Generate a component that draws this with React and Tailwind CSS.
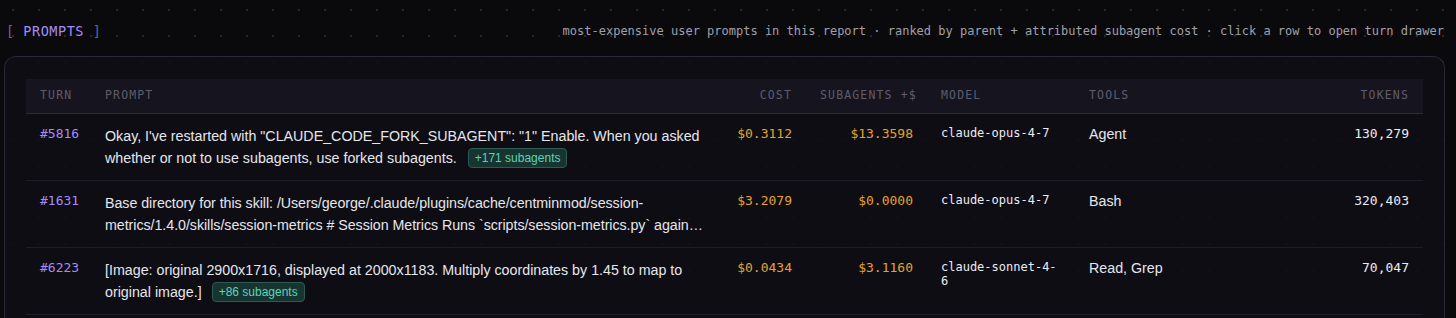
const rows = [
  {
    turn: '#5816',
    prompt: 'Okay, I\'ve restarted with "CLAUDE_CODE_FORK_SUBAGENT": "1" Enable. When you asked whether or not to use subagents, use forked subagents.',
    badge: '+171 subagents',
    badgeGap: 'ml-[11px]',
    cost: '$0.3112',
    sub: '$13.3598',
    model: 'claude-opus-4-7',
    tools: 'Agent',
    tokens: '130,279',
  },
  {
    turn: '#1631',
    prompt: 'Base directory for this skill: /Users/george/.claude/plugins/cache/centminmod/session-metrics/1.4.0/skills/session-metrics # Session Metrics Runs `scripts/session-metrics.py` against the current session and reports cost',
    cost: '$3.2079',
    sub: '$0.0000',
    model: 'claude-opus-4-7',
    tools: 'Bash',
    tokens: '320,403',
  },
  {
    turn: '#6223',
    prompt: '[Image: original 2900x1716, displayed at 2000x1183. Multiply coordinates by 1.45 to map to original image.]',
    badge: '+86 subagents',
    badgeGap: 'ml-[10px]',
    cost: '$0.0434',
    sub: '$3.1160',
    model: 'claude-sonnet-4-6',
    tools: 'Read, Grep',
    tokens: '70,047',
  },
];

const mono = "font-['DejaVu_Sans_Mono',monospace]";
const sans = "font-['Liberation_Sans',Arial,sans-serif]";

function HeaderCell({children, align = 'left'}) {
  return (
    <th
      className={`whitespace-nowrap px-[14px] py-0 text-[11.5px] font-normal uppercase tracking-[0.1em] text-[#5f5c6e] ${mono} ${
        align === 'right' ? 'text-right' : 'text-left'
      }`}
    >
      {children}
    </th>
  );
}

function PromptRow({row}) {
  return (
    <tr className="border-b border-[#1f1d2a] align-top">
      <td className={`px-[14px] pt-[11px] text-[13px] leading-[18px] text-[#a48cf7] ${mono}`}>
        {row.turn}
      </td>
      <td className={`px-[14px] py-[11px] text-[14.25px] leading-[22px] text-[#e6e6ec] ${sans}`}>
        {row.badge ? (
          <div>
            {row.prompt}
            <span
              className={`${row.badgeGap} inline-block h-5 rounded-[4px] border border-[#2d5a52] bg-[#163430] px-[6px] align-[1px] text-[12px] leading-[18px] text-[#5fd3b6]`}
            >
              {row.badge}
            </span>
          </div>
        ) : (
          <div className="line-clamp-2 tracking-[-0.05px]">{row.prompt}</div>
        )}
      </td>
      <td className={`px-[14px] pt-[11px] text-right text-[13px] leading-[18px] text-[#e5a32b] ${mono}`}>
        {row.cost}
      </td>
      <td className={`px-[14px] pt-[11px] text-right text-[13px] leading-[18px] text-[#e5a32b] ${mono}`}>
        {row.sub}
      </td>
      <td className={`px-[14px] pt-[12px] text-[12px] leading-[14px] break-all text-[#ececf2] ${mono}`}>
        {row.model}
      </td>
      <td className={`px-[14px] pt-[11px] text-[14.25px] leading-[18px] text-[#e6e6ec] ${sans}`}>
        {row.tools}
      </td>
      <td className={`px-[14px] pt-[11px] text-right text-[13px] leading-[18px] text-[#ececf2] ${mono}`}>
        {row.tokens}
      </td>
    </tr>
  );
}

export default function App() {
  return (
    <div className="min-h-[318px] w-full overflow-hidden bg-[#0a0a0c] bg-[radial-gradient(circle,#272631_1px,transparent_1.2px)] bg-[size:26px_26px] bg-[position:0_-3px] px-1 pt-[22px]">
      <div className="flex items-center justify-between pl-[2px] pr-[8px]">
        <div className={`text-[13.5px] leading-[18px] tracking-[0.04em] ${mono}`}>
          <span className="text-[#6b5fa8]">[</span>
          <span className="text-[#a48cf7]"> PROMPTS </span>
          <span className="text-[#6b5fa8]">]</span>
        </div>
        <div className={`text-[12px] leading-[18px] text-[#a0a0ab] ${mono}`}>
          most-expensive user prompts in this report · ranked by parent + attributed subagent cost · click a row to open turn drawer
        </div>
      </div>

      <div className="mt-4 w-[1441px] rounded-t-[12px] border border-b-0 border-[#2a2838] bg-[#0f0e16]/85 px-[21px] pt-[22px] pb-6">
        <table className="w-full table-fixed border-collapse">
          <colgroup>
            <col className="w-[65px]" />
            <col className="w-[630px]" />
            <col className="w-[85px]" />
            <col className="w-[121px]" />
            <col className="w-[148px]" />
            <col className="w-[174px]" />
            <col />
          </colgroup>
          <thead>
            <tr className="h-[34px] border-b border-[#2c2840] bg-[#17151f]/90">
              <HeaderCell>Turn</HeaderCell>
              <HeaderCell>Prompt</HeaderCell>
              <HeaderCell align="right">Cost</HeaderCell>
              <HeaderCell align="right">Subagents +$</HeaderCell>
              <HeaderCell>Model</HeaderCell>
              <HeaderCell>Tools</HeaderCell>
              <HeaderCell align="right">Tokens</HeaderCell>
            </tr>
          </thead>
          <tbody>
            {rows.map((row) => (
              <PromptRow key={row.turn} row={row} />
            ))}
          </tbody>
        </table>
      </div>
    </div>
  );
}
